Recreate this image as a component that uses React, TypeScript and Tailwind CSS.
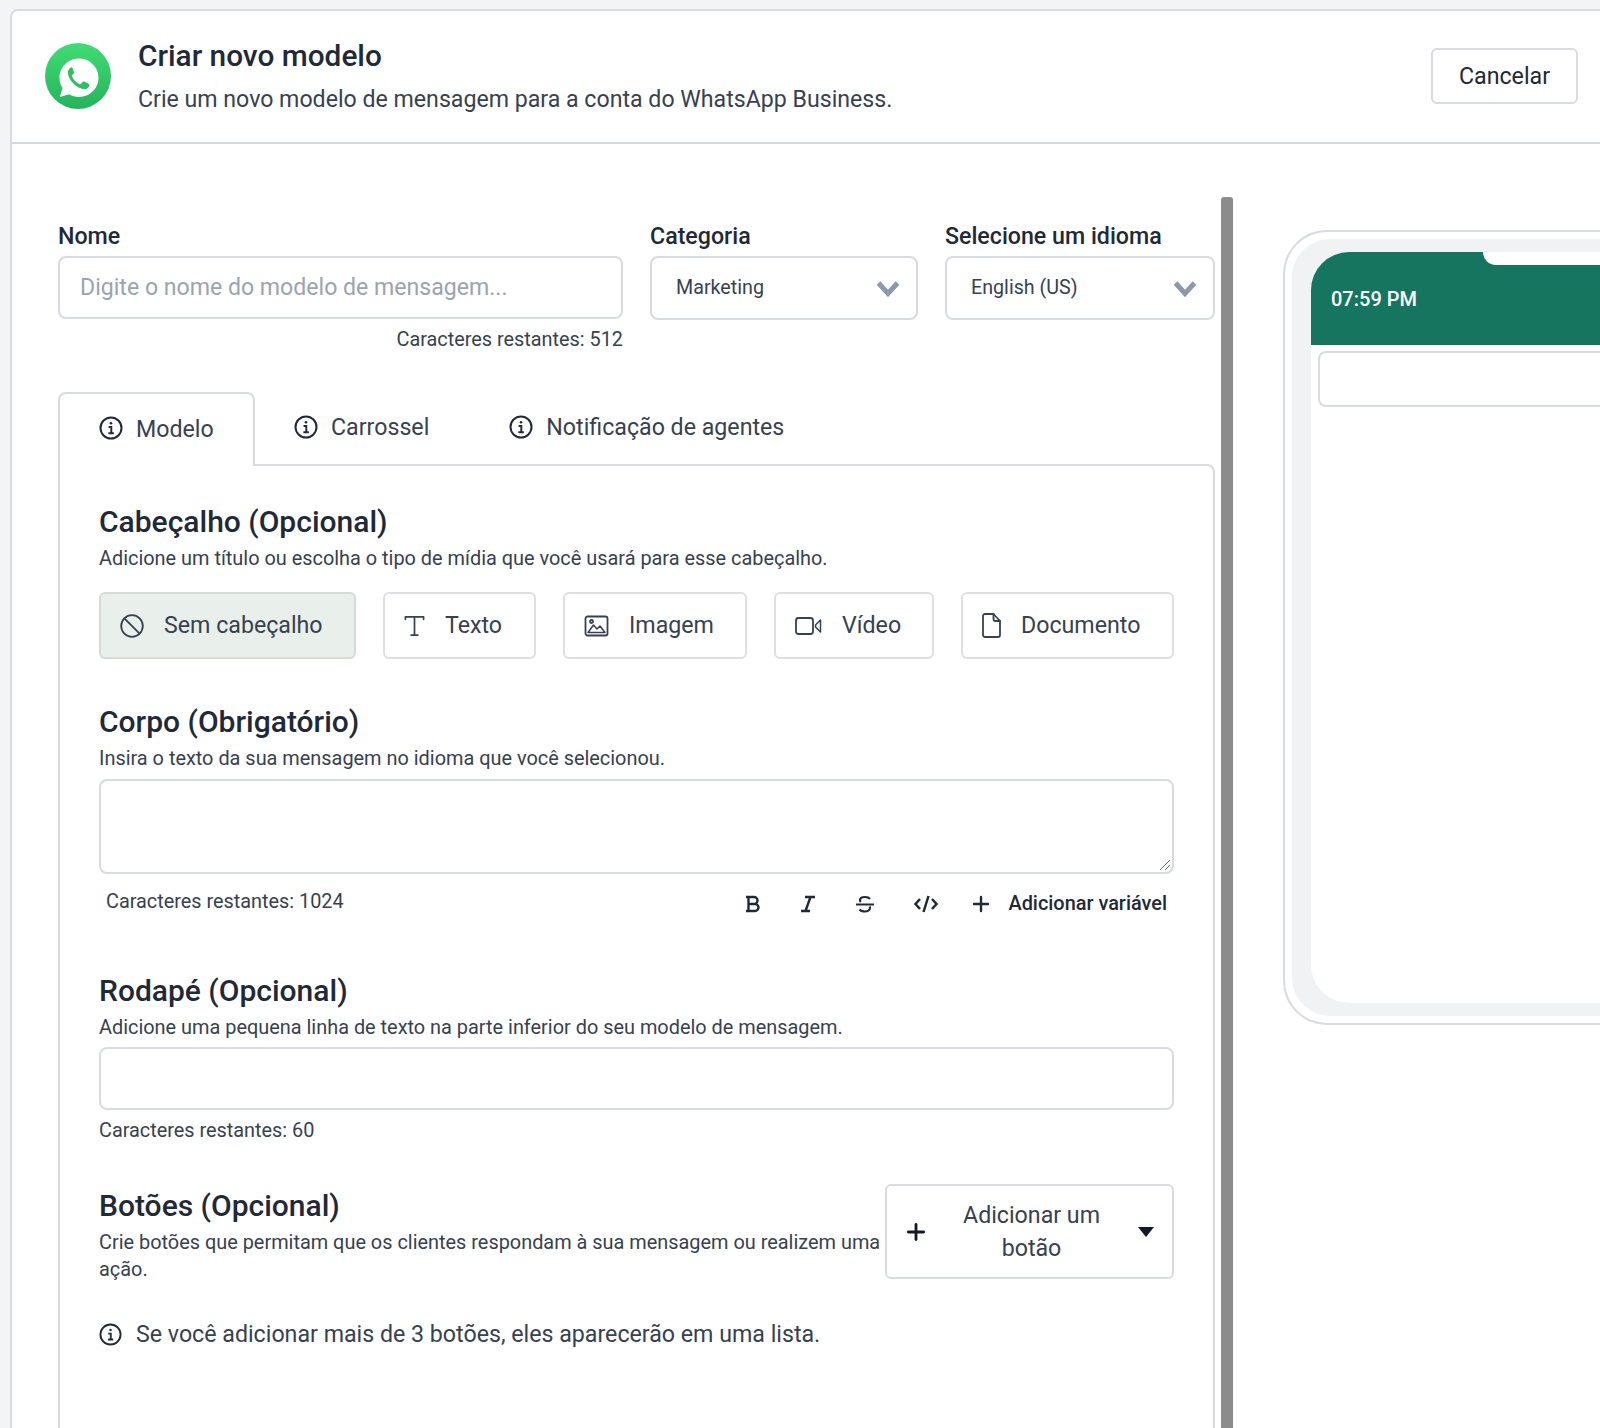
import type { ReactNode } from "react";
import { Plus } from "lucide-react";

function InfoIcon({ className = "" }: { className?: string }) {
  return (
    <svg viewBox="0 0 24 24" fill="none" stroke="currentColor" strokeWidth="2" className={className}>
      <circle cx="12" cy="12" r="10.5" />
      <circle cx="12" cy="7.3" r="1.3" fill="currentColor" stroke="none" />
      <path d="M9.6 11h2.7v6M9.4 17.2h5.4" strokeWidth="1.9" />
    </svg>
  );
}

function WhatsAppLogo() {
  return (
    <svg viewBox="0 0 66 66" className="w-[66px] h-[66px] shrink-0">
      <defs>
        <linearGradient id="wa" x1="0" y1="0" x2="0" y2="1">
          <stop offset="0" stopColor="#3fdc74" />
          <stop offset="1" stopColor="#27b35c" />
        </linearGradient>
      </defs>
      <circle cx="33" cy="33" r="33" fill="url(#wa)" />
      <g transform="translate(1 2)">
        <path
          d="M33 13.5c-10.8 0-19.5 8.6-19.5 19.3 0 3.8 1.1 7.3 3 10.3L13.8 52l9.3-2.7c2.9 1.7 6.3 2.7 9.9 2.7 10.8 0 19.5-8.6 19.5-19.2S43.8 13.5 33 13.5Z"
          fill="#fff"
        />
        <path
          d="M26.3 22.5c-.5-.1-1.5-.1-2.2.5-1.3 1.2-2.4 3-2.2 5 .4 3.6 2.3 7.3 5.5 10.6 3.3 3.4 7 5.3 10.5 5.6 2.3.2 4.3-1.1 5.2-2.7.4-.7.4-1.6.2-2.1-.2-.4-.6-.6-1.2-.9l-4-1.9c-.6-.3-1.1-.2-1.5.3l-1.7 2.1c-.3.4-.7.4-1.2.2-1.8-.8-3.5-2-4.9-3.5-1.2-1.3-2.2-2.7-2.9-4.2-.2-.5-.2-.8.2-1.2l1.5-1.7c.4-.4.5-.9.3-1.5l-1.500-4.100c-.2-.6-.5-.9-1.100-.5Z"
          fill="#2cc063"
        />
      </g>
    </svg>
  );
}

function Chevron() {
  return (
    <svg viewBox="0 0 24 18" className="w-6 h-[18px] shrink-0">
      <path d="M2.5 4 12 14.5 21.5 4" fill="none" stroke="#8c99a8" strokeWidth="5" />
    </svg>
  );
}

function Select({ value, width }: { value: string; width: string }) {
  return (
    <div className={`h-[64px] rounded-lg border-2 border-[#d8dbdf] bg-white flex items-center justify-between pl-[24px] pr-[16px] text-[19.7px] text-[#374151] ${width}`}>
      <span>{value}</span>
      <Chevron />
    </div>
  );
}

function HeaderOption({ label, width, icon, active = false }: { label: string; width: string; icon: ReactNode; active?: boolean }) {
  return (
    <div className={`h-[67px] rounded-md border-2 flex items-center pl-[19px] gap-[20px] text-[23.2px] text-[#374151] ${width} ${active ? "bg-[#e9efea] border-[#d6dbd7]" : "bg-white border-[#dddfe2]"}`}>
      {icon}
      <span>{label}</span>
    </div>
  );
}

function SectionTitle({ children }: { children: ReactNode }) {
  return <h2 className="text-[30px] leading-[36px] font-medium text-[#1f2937] mb-[5px]">{children}</h2>;
}

function SectionDesc({ children }: { children: ReactNode }) {
  return <p className="text-[19.9px] leading-[27px] text-[#374151]">{children}</p>;
}

const iconStroke = { fill: "none", stroke: "#374151", strokeWidth: 1.8, strokeLinejoin: "round" as const, strokeLinecap: "round" as const };

export default function App() {
  return (
    <div className="font-['Roboto',sans-serif] w-full h-[1428px] overflow-hidden bg-[#f3f4f6] pt-[9px] pl-[10px]">
      <div className="w-[1640px] h-[1460px] bg-white rounded-tl-lg border-2 border-[#d8dbdf] border-r-0 border-b-0">
        {/* top bar */}
        <header className="h-[133px] border-b-2 border-[#d4d7db] flex items-start pl-[33px] pr-[72px] pt-[32px]">
          <WhatsAppLogo />
          <div className="ml-[27px] -mt-[5px]">
            <h1 className="text-[29.8px] leading-[36px] font-medium text-[#1f2937]">Criar novo modelo</h1>
            <p className="text-[23.15px] leading-[30px] mt-[11px] text-[#374151]">Crie um novo modelo de mensagem para a conta do WhatsApp Business.</p>
          </div>
          <button className="ml-auto mt-[5px] w-[147px] h-[56px] rounded-md border-2 border-[#d8dbdf] bg-white text-[23.2px] text-[#1f2937]">Cancelar</button>
        </header>

        <main className="flex items-start pl-[46px]">
          <div className="w-[1157px] pt-[79px] shrink-0">
            {/* name / category / language */}
            <div className="flex gap-[27px]">
              <div className="w-[565px]">
                <label className="block text-[23.2px] leading-[26px] font-medium text-[#1f2937] mb-[7px]">Nome</label>
                <div className="h-[63px] rounded-lg border-2 border-[#d8dbdf] flex items-center pl-[20px] pt-[1px] text-[23.1px] text-[#9ca3af]">Digite o nome do modelo de mensagem...</div>
                <p className="text-right text-[19.85px] leading-[26px] mt-[8px] text-[#374151]">Caracteres restantes: 512</p>
              </div>
              <div>
                <label className="block text-[23.2px] leading-[26px] font-medium text-[#1f2937] mb-[7px]">Categoria</label>
                <Select value="Marketing" width="w-[268px]" />
              </div>
              <div>
                <label className="block text-[23.2px] leading-[26px] font-medium text-[#1f2937] mb-[7px]">Selecione um idioma</label>
                <Select value="English (US)" width="w-[270px]" />
              </div>
            </div>

            {/* tabs */}
            <div className="flex items-center mt-[39px] text-[23.2px] leading-[24px] text-[#374151]">
              <div className="w-[197px] h-[74px] -mb-[2px] rounded-t-lg border-2 border-b-0 border-[#d8dbdf] bg-white pl-[39px] pt-[22px] flex items-start gap-[13px] relative z-10">
                <InfoIcon className="w-[24px] h-[24px] text-[#1f2937]" />
                <span className="pt-[1px]">Modelo</span>
              </div>
              <div className="flex items-center gap-[13px] pb-[3px] ml-[39px]">
                <InfoIcon className="w-[24px] h-[24px] text-[#1f2937]" />
                <span>Carrossel</span>
              </div>
              <div className="flex items-center gap-[13px] pb-[3px] ml-[80px]">
                <InfoIcon className="w-[24px] h-[24px] text-[#1f2937]" />
                <span>Notificação de agentes</span>
              </div>
            </div>

            <section className="border-2 border-b-0 border-[#d8dbdf] rounded-tr-lg px-[39px] pt-[38px] h-[1000px]">
              <SectionTitle>Cabeçalho (Opcional)</SectionTitle>
              <SectionDesc>Adicione um título ou escolha o tipo de mídia que você usará para esse cabeçalho.</SectionDesc>
              <div className="flex gap-[27px] mt-[20px]">
                <HeaderOption
                  active
                  label="Sem cabeçalho"
                  width="w-[257px]"
                  icon={
                    <svg viewBox="0 0 24 24" className="w-[24px] h-[24px]" {...iconStroke}>
                      <circle cx="12" cy="12" r="10.8" />
                      <path d="M4.4 4.4 19.6 19.6" />
                    </svg>
                  }
                />
                <HeaderOption
                  label="Texto"
                  width="w-[153px]"
                  icon={
                    <svg viewBox="0 0 22 24" className="w-[21px] h-[24px]" {...iconStroke}>
                      <path d="M1.5 5V2.5h19V5M11 2.5v19M7.5 21.5h7" />
                    </svg>
                  }
                />
                <HeaderOption
                  label="Imagem"
                  width="w-[184px]"
                  icon={
                    <svg viewBox="0 0 25 24" className="w-[25px] h-[24px]" {...iconStroke}>
                      <rect x="1.5" y="2.5" width="22" height="19" rx="2" />
                      <circle cx="7.5" cy="7.5" r="1.5" />
                      <path d="M4 18.5 9.5 11l3.5 4 3-3 5 6.5Z" strokeWidth={1.5} />
                    </svg>
                  }
                />
                <HeaderOption
                  label="Vídeo"
                  width="w-[160px]"
                  icon={
                    <svg viewBox="0 0 27 24" className="w-[27px] h-[24px]" {...iconStroke}>
                      <rect x="1" y="4" width="17" height="16" rx="2.5" />
                      <path d="M25.5 6 20.5 11v2l5 5Z" strokeWidth={1.5} />
                    </svg>
                  }
                />
                <HeaderOption
                  label="Documento"
                  width="w-[213px]"
                  icon={
                    <svg viewBox="0 0 19 25" className="w-[19px] h-[25px]" {...iconStroke}>
                      <path d="M3 1h8.5l6.5 7v14a2 2 0 0 1-2 2H3a2 2 0 0 1-2-2V3a2 2 0 0 1 2-2Z" />
                      <path d="M11.5 1v5a2 2 0 0 0 2 2H18" />
                    </svg>
                  }
                />
              </div>

              <div className="mt-[45px]">
                <SectionTitle>Corpo (Obrigatório)</SectionTitle>
                <SectionDesc>Insira o texto da sua mensagem no idioma que você selecionou.</SectionDesc>
              </div>
              <div className="relative h-[95px] mt-[7px] rounded-lg border-2 border-[#d8dbdf]">
                <svg viewBox="0 0 12 12" className="absolute right-[1px] bottom-[1px] w-[12px] h-[12px]">
                  <path d="M1 11 11 1M6 11l5-5" stroke="#6b7280" strokeWidth="1" />
                </svg>
              </div>
              <div className="flex items-center justify-between pl-[7px] pr-[7px] h-[28px] mt-[16px]">
                <p className="text-[19.85px] leading-[26px] text-[#374151] -mt-[5px]">Caracteres restantes: 1024</p>
                <div className="flex items-center text-[#1f2937]">
                  <svg viewBox="0 0 16 18" className="w-[16px] h-[18px]">
                    <path d="M1 2h8a3.5 3.5 0 0 1 0 7H3.5M3.5 9H10a3.5 3.5 0 0 1 0 7H1M3.5 2v14" fill="none" stroke="#1f2937" strokeWidth="2.4" />
                  </svg>
                  <svg viewBox="0 0 16 18" className="w-[16px] h-[18px] ml-[39px]">
                    <path d="M5 2h10M1 16h9M10.5 2 5.5 16" fill="none" stroke="#1f2937" strokeWidth="2.4" />
                  </svg>
                  <svg viewBox="0 0 20 18" className="w-[20px] h-[18px] ml-[39px]">
                    <path d="M15 4C14 2.5 12 2 10 2 7.5 2 5 3 5 5.2c0 .7.3 1.3.8 1.8M1 9.5h18M14.6 11.5c.3.5.4 1 .4 1.5 0 2.3-2.5 3.5-5 3.500-2.300 0-4.500-.7-5.500-2" fill="none" stroke="#1f2937" strokeWidth="2.2" />
                  </svg>
                  <svg viewBox="0 0 26 18" className="w-[26px] h-[18px] ml-[38px]">
                    <path d="M7 4 2.5 9 7 14M19 4l4.5 5-4.5 5M15.5 1 10.500 17" fill="none" stroke="#1f2937" strokeWidth="2.5" />
                  </svg>
                  <Plus className="w-[24px] h-[24px] ml-[30px] text-[#1f2937]" strokeWidth={2.4} />
                  <span className="ml-[15px] text-[19.9px] font-medium text-[#1f2937]">Adicionar variável</span>
                </div>
              </div>

              <div className="mt-[55px]">
                <SectionTitle>Rodapé (Opcional)</SectionTitle>
                <SectionDesc>Adicione uma pequena linha de texto na parte inferior do seu modelo de mensagem.</SectionDesc>
              </div>
              <div className="h-[63px] mt-[6px] rounded-lg border-2 border-[#d8dbdf]" />
              <p className="text-[19.85px] leading-[26px] mt-[8px] text-[#374151]">Caracteres restantes: 60</p>

              <div className="flex items-start justify-between mt-[40px]">
                <div className="w-[785px] pt-[4px]">
                  <SectionTitle>Botões (Opcional)</SectionTitle>
                  <SectionDesc>Crie botões que permitam que os clientes respondam à sua mensagem ou realizem uma ação.</SectionDesc>
                </div>
                <div className="w-[289px] h-[95px] rounded-md border-2 border-[#d8dbdf] flex items-center pl-[16px] pr-[18px] text-[23.2px] leading-[33px] text-[#374151]">
                  <Plus className="w-[26px] h-[26px] text-[#111827] shrink-0" strokeWidth={2.6} />
                  <span className="flex-1 text-center pl-[24px] pr-[28px]">Adicionar um botão</span>
                  <svg viewBox="0 0 16 10" className="w-[16px] h-[10px] shrink-0">
                    <path d="M0 0h16L8 10Z" fill="#111827" />
                  </svg>
                </div>
              </div>

              <div className="flex items-center gap-[14px] mt-[35px] text-[23.2px] leading-[32px] text-[#374151]">
                <InfoIcon className="w-[23px] h-[23px] text-[#1f2937]" />
                <span>Se você adicionar mais de 3 botões, eles aparecerão em uma lista.</span>
              </div>
            </section>
          </div>

          {/* scrollbar thumb */}
          <div className="w-3 h-[1300px] ml-[6px] mt-[53px] rounded-t-[3px] bg-[#8c8c8c] shrink-0" />

          {/* phone preview */}
          <div className="ml-[50px] mt-[86px] w-[420px] h-[795px] shrink-0 rounded-l-[44px] border-2 border-r-0 border-[#d8dbdf] pl-[7px] py-[7px] bg-white">
            <div className="h-full rounded-l-[38px] bg-[#f0f2f3] pl-[19px] pt-[13px] pb-[13px]">
              <div className="h-full rounded-l-[38px] bg-white overflow-hidden">
                <div className="relative h-[93px] bg-[#15755f] pl-[20px] flex items-center text-[20px] font-medium text-white">
                  <span>07:59 PM</span>
                  <div className="absolute left-[172px] top-0 h-[13px] w-[300px] bg-white rounded-bl-[14px]" />
                </div>
                <div className="h-[56px] ml-[7px] mt-[6px] rounded-l-lg border-2 border-r-0 border-[#d8dbdf]" />
              </div>
            </div>
          </div>
        </main>
      </div>
    </div>
  );
}
